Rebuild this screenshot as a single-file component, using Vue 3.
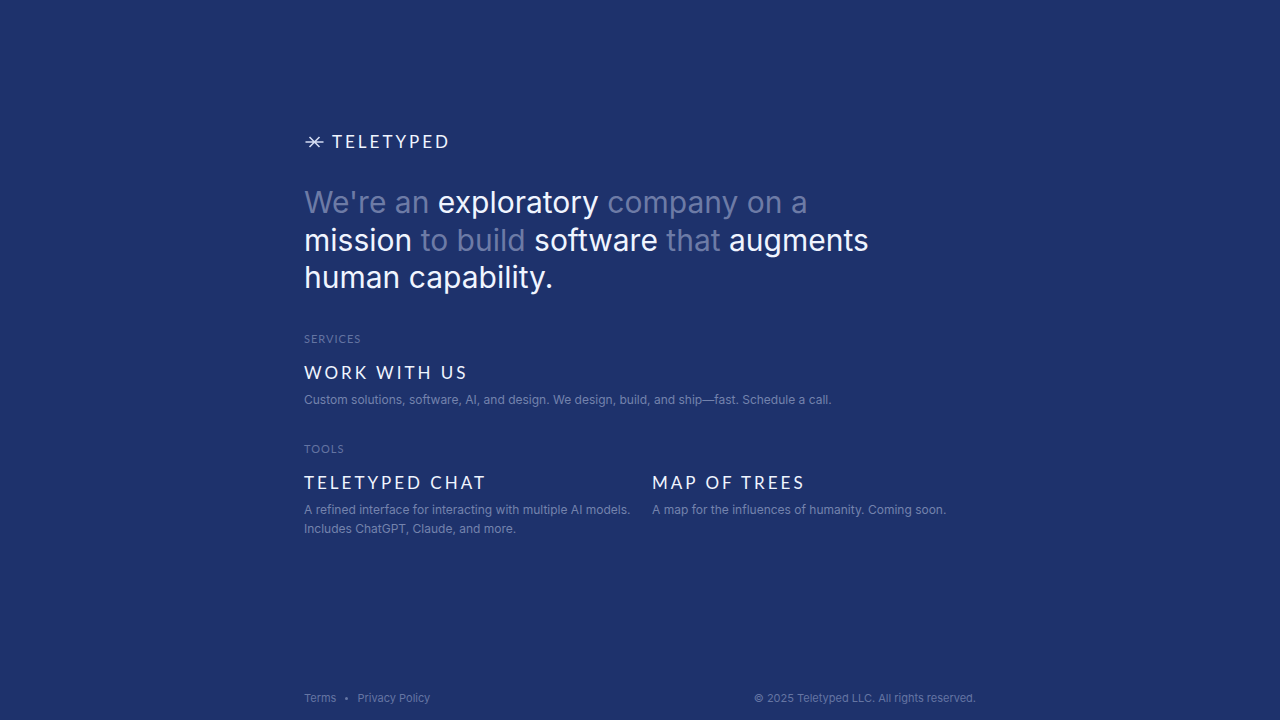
<script setup>
const intro = [
  { text: "We're an ", strong: false },
  { text: 'exploratory', strong: true },
  { text: ' company on a ', strong: false },
  { text: 'mission', strong: true },
  { text: ' to build ', strong: false },
  { text: 'software', strong: true },
  { text: ' that ', strong: false },
  { text: 'augments ', strong: true },
  { text: 'human capability.', strong: true },
]

const sections = [
  {
    label: 'SERVICES',
    wide: true,
    items: [
      {
        title: 'WORK WITH US',
        text: 'Custom solutions, software, AI, and design. We design, build, and ship—fast. Schedule a call.',
      },
    ],
  },
  {
    label: 'TOOLS',
    wide: false,
    items: [
      {
        title: 'TELETYPED CHAT',
        text: 'A refined interface for interacting with multiple AI models. Includes ChatGPT, Claude, and more.',
      },
      {
        title: 'MAP OF TREES',
        text: 'A map for the influences of humanity. Coming soon.',
      },
    ],
  },
]
</script>

<template>
  <div class="page">
    <main class="content">
      <a class="brand" href="#">
        <svg class="mark" viewBox="0 0 20 16" aria-hidden="true">
          <path d="M1 8H19M5 3L15 13M15 3L5 13" />
        </svg>
        <span>TELETYPED</span>
      </a>

      <h1 class="intro">
        <span v-for="(part, i) in intro" :key="i" :class="{ strong: part.strong }">{{ part.text }}</span>
      </h1>

      <section v-for="section in sections" :key="section.label" class="section">
        <h2 class="label">{{ section.label }}</h2>
        <div class="items" :class="{ wide: section.wide }">
          <a v-for="item in section.items" :key="item.title" class="item" href="#">
            <h3 class="title">{{ item.title }}</h3>
            <p class="text">{{ item.text }}</p>
          </a>
        </div>
      </section>
    </main>

    <footer class="footer">
      <nav class="links">
        <a href="#">Terms</a>
        <span class="dot" aria-hidden="true"></span>
        <a href="#">Privacy Policy</a>
      </nav>
      <span>© 2025 Teletyped LLC. All rights reserved.</span>
    </footer>
  </div>
</template>

<style>
body {
  margin: 0;
  background: #1e326c;
}
</style>

<style scoped>
.page {
  min-height: 100vh;
  box-sizing: border-box;
  padding: 0 24px;
  display: flex;
  flex-direction: column;
  align-items: center;
  background: #1e326c;
  color: #f0f5ff;
  font-family: Inter, "Liberation Sans", sans-serif;
}

a {
  color: inherit;
  text-decoration: none;
}

.content {
  flex: 1;
  width: 100%;
  max-width: 672px;
  display: flex;
  flex-direction: column;
  justify-content: center;
}

.brand {
  display: flex;
  align-items: center;
  gap: 7px;
  font: 400 17px/20px Lato, sans-serif;
  letter-spacing: 3px;
}

.mark {
  width: 21px;
  height: 16px;
  fill: none;
  stroke: #d4dcf2;
  stroke-width: 1.6;
}

.intro {
  max-width: 576px;
  margin: 32px 0 2px;
  font-size: 30px;
  font-weight: 400;
  line-height: 1.25;
  color: #6d7ba6;
}

.strong {
  color: #f0f5ff;
}

.section {
  margin-top: 32px;
}

.label {
  margin: 0 0 14px;
  font: 400 11px/16px Lato, sans-serif;
  letter-spacing: 1px;
  color: #6474a2;
}

.items {
  display: grid;
  grid-template-columns: 28fr 27fr;
  gap: 12px;
}

.items.wide {
  grid-template-columns: 1fr;
}

.title {
  margin: 0 0 5px;
  font: 400 17px/24px Lato, sans-serif;
  letter-spacing: 3px;
}

.text {
  margin: 0;
  font-size: 12px;
  line-height: 19px;
  color: #7483ad;
}

.footer {
  width: 100%;
  max-width: 672px;
  padding: 20px 0 14px;
  display: flex;
  justify-content: space-between;
  font-size: 11px;
  line-height: 16px;
  color: #6575a3;
}

.links {
  display: flex;
  align-items: center;
  gap: 9px;
}

.dot {
  width: 3px;
  height: 3px;
  border-radius: 50%;
  background: #6575a3;
}
</style>
